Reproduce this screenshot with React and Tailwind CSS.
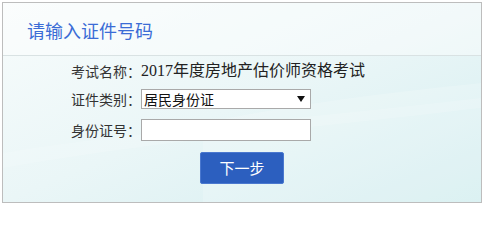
export default function App() {
  const cjk = { fontFamily: '"Noto Sans CJK SC", "Noto Sans", sans-serif' };
  return (
    <div className="w-[484px] h-[205px] bg-white p-[2px]" style={cjk}>
      <div className="relative w-[480px] h-[201px] border border-[#bdbdbd] bg-gradient-to-br from-[#f8fcfc] via-[#eaf6f7] to-[#d4eef0] overflow-hidden">
        <svg className="absolute inset-0 pointer-events-none" width="478" height="199" viewBox="0 0 478 199">
          <path d="M200 120 C 300 100, 380 90, 478 80 L478 199 L200 199 Z" fill="#ffffff" opacity="0.18" />
          <path d="M0 150 C 120 130, 260 120, 478 95 L478 105 C 280 128, 140 140, 0 165 Z" fill="#ffffff" opacity="0.15" />
        </svg>
        <div className="relative flex flex-col">
          <div className="h-[53px] border-b border-[#d9e2e3] bg-[#ffffff]/40 flex items-center pl-[24px]">
            <span className="text-[18px] leading-none text-[#3b6cd6] pt-[2px]">请输入证件号码</span>
          </div>
          <div className="pl-[68px]">
            <div className="mt-[4px] h-[22px] flex items-center">
              <span className="w-[70px] text-[14px] text-[#333]">考试名称：</span>
              <span className="text-[16px] text-[#222]" style={{ fontFamily: '"Liberation Serif", "Noto Sans CJK SC", serif' }}>
                2017年度房地产估价师资格考试
              </span>
            </div>
            <div className="mt-[7px] h-[20px] flex items-center">
              <span className="w-[70px] text-[14px] text-[#333]">证件类别：</span>
              <div className="w-[170px] h-[20px] bg-white border border-[#a9a9a9] flex items-center justify-between pl-[2px] pr-[5px]">
                <span className="text-[14px] leading-none text-[#111]">居民身份证</span>
                <span className="w-0 h-0 border-l-[4px] border-r-[4px] border-t-[6px] border-l-transparent border-r-transparent border-t-[#111]"></span>
              </div>
            </div>
            <div className="mt-[10px] h-[22px] flex items-center">
              <span className="w-[70px] text-[14px] text-[#333]">身份证号：</span>
              <div className="w-[170px] h-[22px] bg-white border border-[#a9a9a9]"></div>
            </div>
            <div className="mt-[11px] pl-[129px]">
              <div className="w-[84px] h-[32px] bg-[#2c5fbf] border border-[#4a78cf] rounded-[2px] flex items-center justify-center text-white text-[15px]">
                下一步
              </div>
            </div>
          </div>
        </div>
      </div>
    </div>
  );
}
